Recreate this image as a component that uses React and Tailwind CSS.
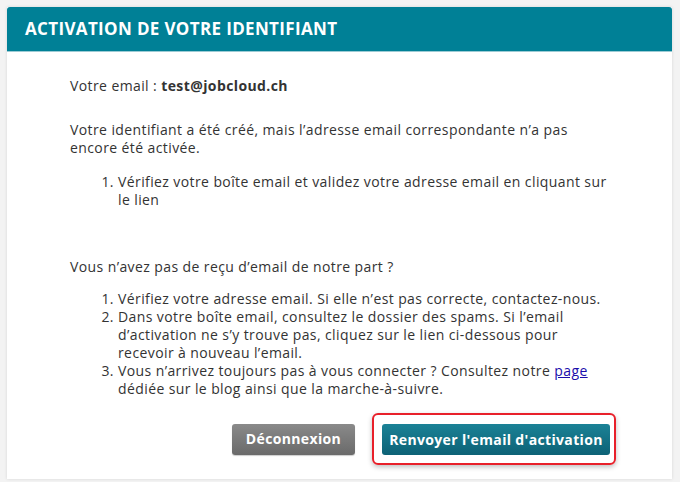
export default function App() {
  const f = { fontFamily: '"Open Sans", "Liberation Sans", sans-serif' };
  return (
    <div className="w-[680px] h-[482px] bg-[#f3f3f3] pt-[7px] pl-[7px] overflow-hidden" style={f}>
      <div className="w-[665px] h-[472px] bg-white shadow-[0_0_3px_rgba(0,0,0,0.12)] flex flex-col">
        <div className="h-[45px] bg-[#008096] rounded-t-[3px] flex items-center pl-[18px] border-b border-[#9ccbd4]">
          <h1 className="text-white font-bold text-[17px] tracking-[0.35px]">ACTIVATION DE VOTRE IDENTIFIANT</h1>
        </div>
        <div className="pl-[63px] pt-[25px] text-[14px] tracking-[0.4px] leading-[18px] text-[#333]">
          <p>Votre email : <b>test@jobcloud.ch</b></p>
          <p className="mt-[26px] w-[542px]">Votre identifiant a été créé, mais l’adresse email correspondante n’a pas encore été activée.</p>
          <ol className="list-decimal pl-[48px] mt-[16px] w-[542px]">
            <li>Vérifiez votre boîte email et validez votre adresse email en cliquant sur le lien</li>
          </ol>
          <p className="mt-[49px]">Vous n’avez pas de reçu d’email de notre part ?</p>
          <ol className="list-decimal pl-[48px] mt-[14px] w-[542px]">
            <li>Vérifiez votre adresse email. Si elle n’est pas correcte, contactez-nous.</li>
            <li>Dans votre boîte email, consultez le dossier des spams. Si l’email d’activation ne s’y trouve pas, cliquez sur le lien ci-dessous pour recevoir à nouveau l’email.</li>
            <li>Vous n’arrivez toujours pas à vous connecter ? Consultez notre <a className="text-[#1a0dab] underline">page</a> dédiée sur le blog ainsi que la marche-à-suivre.</li>
          </ol>
          <div className="flex items-center mt-[15px] pl-[162px] tracking-normal">
            <button className="w-[123px] h-[31px] rounded-[3px] bg-gradient-to-b from-[#8a8a8a] to-[#6a6a6a] text-white font-bold text-[14px] tracking-[0.35px] shadow-[0_1px_1px_rgba(0,0,0,0.2)]">Déconnexion</button>
            <div className="ml-[17px] pt-[9px] pb-[8px] pl-[8px] pr-[4px] rounded-[6px] border-2 border-[#e8202a] shadow-[0_2px_5px_rgba(0,0,0,0.25)]">
              <button className="block w-[228px] h-[31px] rounded-[3px] bg-gradient-to-b from-[#1b8296] to-[#0d6276] text-white font-bold text-[14px] tracking-[0.35px]">Renvoyer l'email d'activation</button>
            </div>
          </div>
        </div>
      </div>
    </div>
  );
}
